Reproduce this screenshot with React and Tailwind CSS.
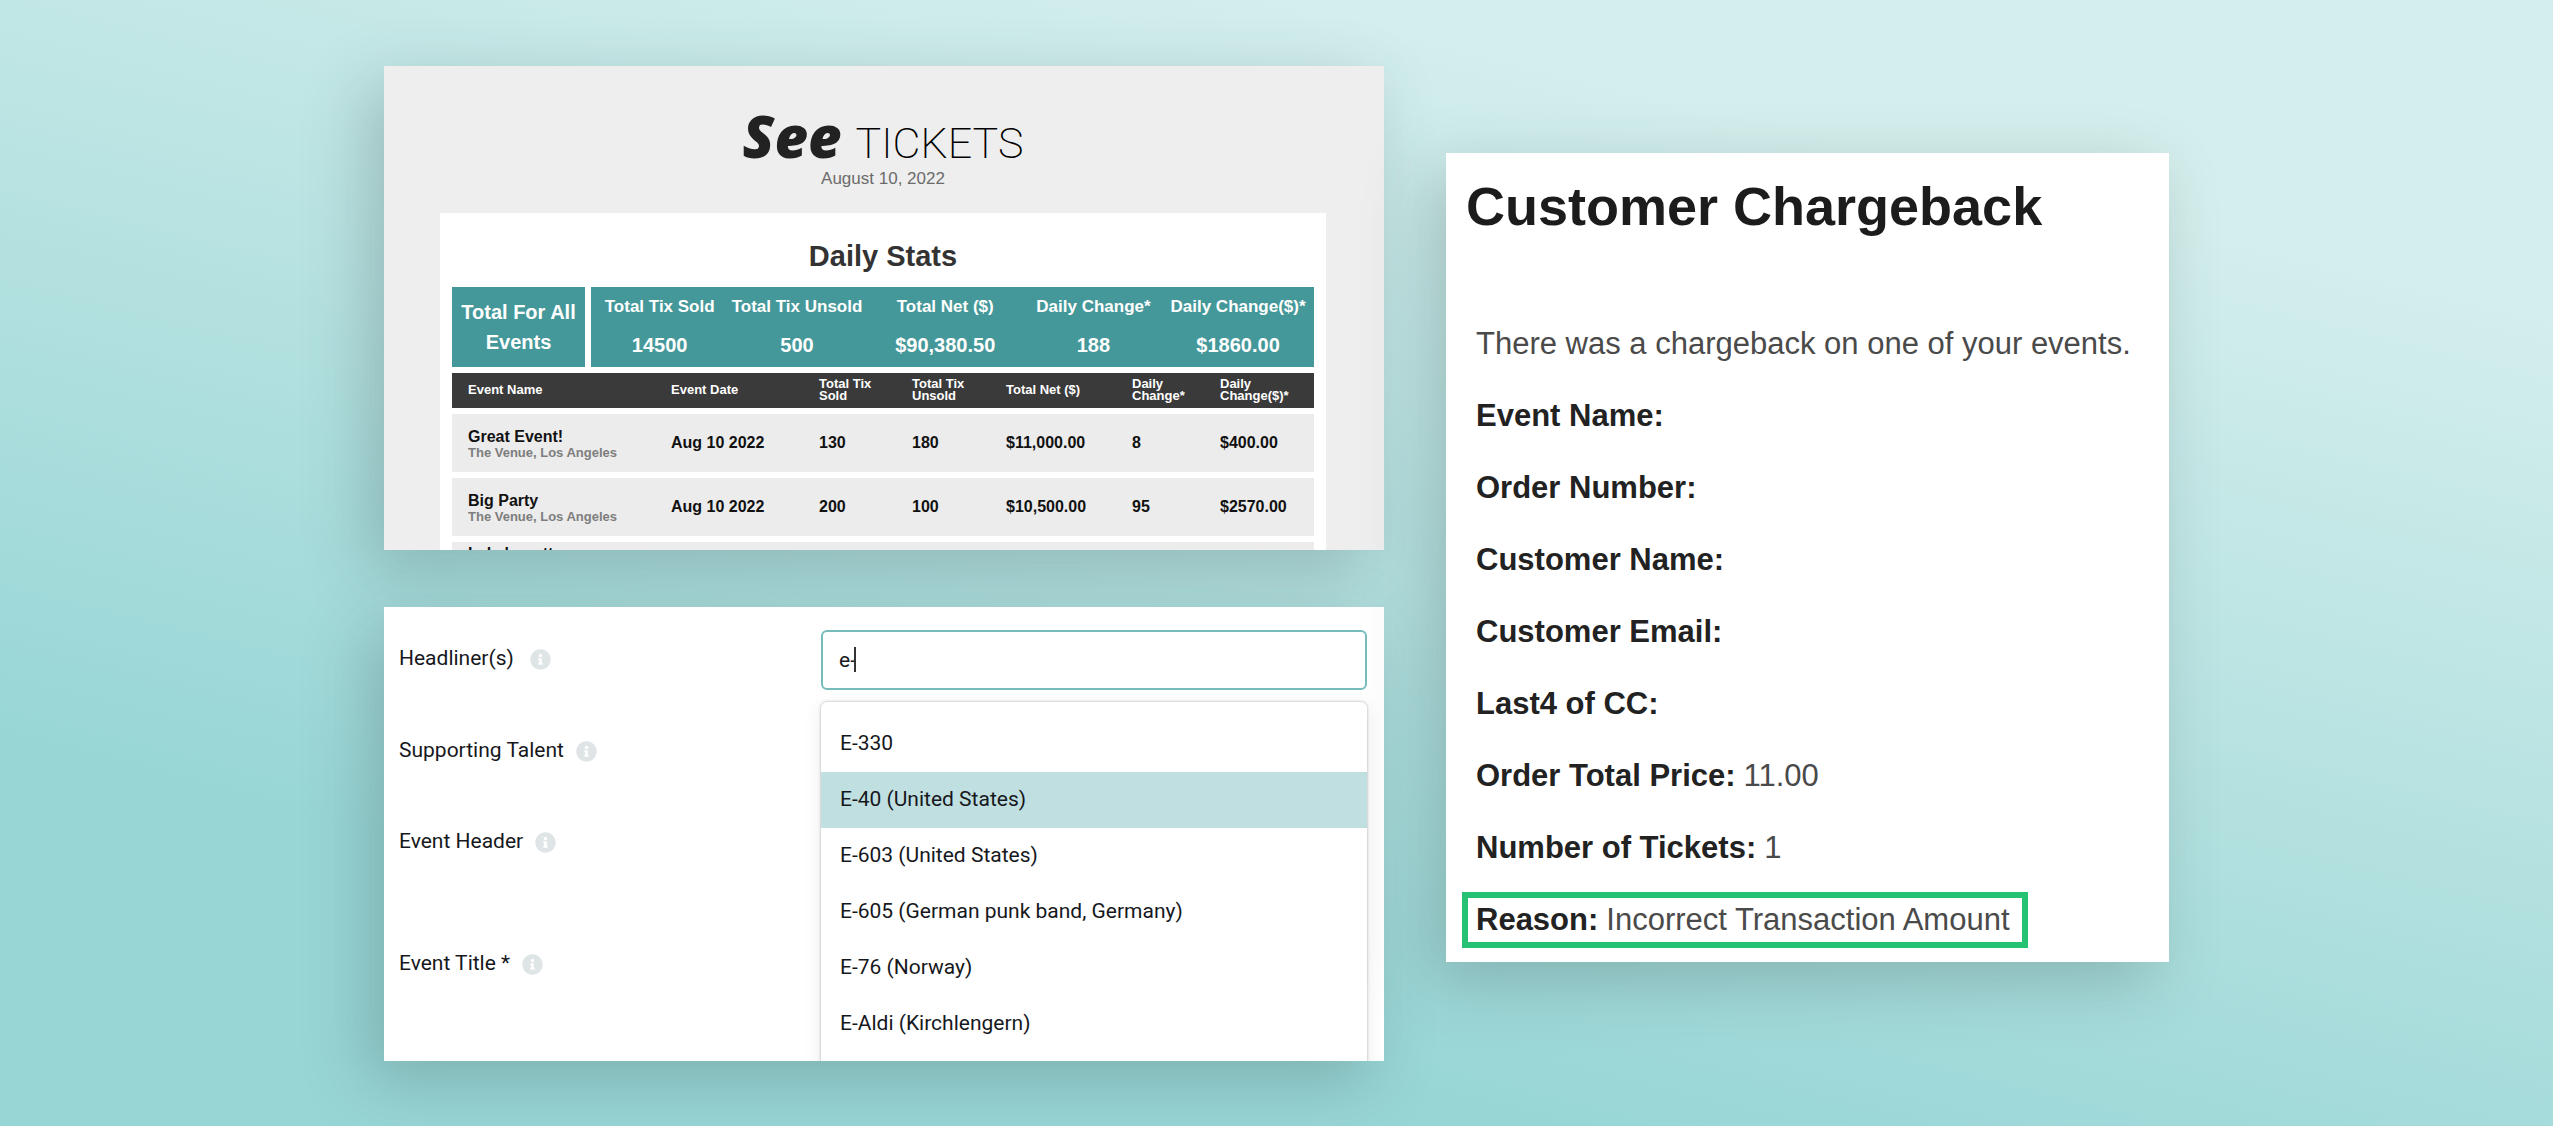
import { useState } from 'react'
import { FaInfoCircle } from 'react-icons/fa'

const TOTALS = [
  { label: 'Total Tix Sold', value: '14500', width: 'w-[19%]' },
  { label: 'Total Tix Unsold', value: '500', width: 'w-[19%]' },
  { label: 'Total Net ($)', value: '$90,380.50', width: 'w-[22%]' },
  { label: 'Daily Change*', value: '188', width: 'w-[19%]' },
  { label: 'Daily Change($)*', value: '$1860.00', width: 'w-[21%]' },
]

const COLUMNS = [
  { label: 'Event Name', width: 'w-[219px]' },
  { label: 'Event Date', width: 'w-[148px]' },
  { label: 'Total Tix Sold', width: 'w-[93px]' },
  { label: 'Total Tix Unsold', width: 'w-[94px]' },
  { label: 'Total Net ($)', width: 'w-[126px]' },
  { label: 'Daily Change*', width: 'w-[88px]' },
  { label: 'Daily Change($)*', width: 'w-[94px]' },
]

const EVENTS = [
  { name: 'Great Event!', venue: 'The Venue, Los Angeles', date: 'Aug 10 2022', sold: '130', unsold: '180', net: '$11,000.00', change: '8', changeNet: '$400.00' },
  { name: 'Big Party', venue: 'The Venue, Los Angeles', date: 'Aug 10 2022', sold: '200', unsold: '100', net: '$10,500.00', change: '95', changeNet: '$2570.00' },
  { name: 'Lakebonett' },
]

const FIELDS = [
  { label: 'Headliner(s)', id: 'headliners', height: 'h-[92px]', gap: 'gap-4' },
  { label: 'Supporting Talent', height: 'h-[91px]', gap: 'gap-3' },
  { label: 'Event Header', height: 'h-[122px]', gap: 'gap-3' },
  { label: 'Event Title *', height: 'h-[91px]', gap: 'gap-3' },
]

const ARTISTS = [
  'E-330',
  'E-40 (United States)',
  'E-603 (United States)',
  'E-605 (German punk band, Germany)',
  'E-76 (Norway)',
  'E-Aldi (Kirchlengern)',
]

const DETAILS = [
  { label: 'Event Name:' },
  { label: 'Order Number:' },
  { label: 'Customer Name:' },
  { label: 'Customer Email:' },
  { label: 'Last4 of CC:' },
  { label: 'Order Total Price:', value: '11.00' },
  { label: 'Number of Tickets:', value: '1' },
  { label: 'Reason:', value: 'Incorrect Transaction Amount', highlight: true },
]

function Logo() {
  return (
    <div className="flex h-[63px] items-baseline justify-center gap-3.5 leading-[60px]">
      <span className="font-['Open_Sans',sans-serif] text-[58px] font-extrabold italic text-[#222]">See</span>
      <span className="font-['Roboto',sans-serif] text-[43px] font-extralight text-black">TICKETS</span>
    </div>
  )
}

function DailyStats() {
  return (
    <section className="h-[484px] overflow-hidden bg-[#eee] pt-10 pr-[58px] pl-14 font-['Liberation_Sans',Arial,sans-serif] shadow-[-16px_20px_60px_rgba(50,70,70,0.26)]">
      <Logo />
      <p className="text-center text-[17px] leading-5 text-[#6b6b6b]">August 10, 2022</p>

      <div className="mt-6 bg-white px-3 pt-6">
        <h2 className="text-center text-[29px] leading-[38px] font-bold text-[#333]">Daily Stats</h2>

        {/* Totals */}
        <div className="mt-3 flex h-20 gap-1.5 text-white">
          <div className="flex w-[133px] shrink-0 items-center justify-center bg-[#45989a] text-center text-[20px] leading-[30px] font-bold">
            Total For All Events
          </div>
          <table className="h-full flex-1 table-fixed bg-[#45989a] text-center font-bold">
            <thead>
              <tr>
                {TOTALS.map((t) => (
                  <th key={t.label} className={`${t.width} pt-2 text-[17px] leading-6 whitespace-nowrap`}>{t.label}</th>
                ))}
              </tr>
            </thead>
            <tbody>
              <tr>
                {TOTALS.map((t) => (
                  <td key={t.label} className="pt-1 text-[20px] leading-6">{t.value}</td>
                ))}
              </tr>
            </tbody>
          </table>
        </div>

        {/* Events */}
        <table className="w-full table-fixed border-separate border-spacing-x-0 border-spacing-y-1.5 text-left font-bold">
          <thead>
            <tr className="h-[35px] bg-[#3a3a3a] text-[13px] leading-3 text-white">
              {COLUMNS.map((c) => (
                <th key={c.label} className={`${c.width} pr-6 first:pl-4 last:pr-4`}>{c.label}</th>
              ))}
            </tr>
          </thead>
          <tbody>
            {EVENTS.map((e) => (
              <tr key={e.name} className="h-[58px] bg-[#ececec] text-[16px] leading-4 text-[#111]">
                <td className={`pt-1 pl-4 ${e.venue ? '' : 'align-top'}`}>
                  {e.name}
                  {e.venue && <div className="text-[13px] text-[#7d7d7d]">{e.venue}</div>}
                </td>
                <td>{e.date}</td>
                <td>{e.sold}</td>
                <td>{e.unsold}</td>
                <td>{e.net}</td>
                <td>{e.change}</td>
                <td>{e.changeNet}</td>
              </tr>
            ))}
          </tbody>
        </table>
      </div>
    </section>
  )
}

function EventForm() {
  const [query, setQuery] = useState('e-')
  const [active, setActive] = useState(1)

  return (
    <section className="flex h-[454px] overflow-hidden bg-white pr-[17px] pl-[15px] font-['Roboto',sans-serif] text-[21px] text-[#16181d] shadow-[-16px_20px_60px_rgba(50,70,70,0.26)]">
      <div className="w-[422px] shrink-0 pt-9">
        {FIELDS.map((f) => (
          <div key={f.label} className={`flex items-start ${f.height} ${f.gap}`}>
            <label htmlFor={f.id} className="leading-[30px]">{f.label}</label>
            <FaInfoCircle className="mt-1.5 size-[21px] text-[#dfe5e7]" />
          </div>
        ))}
      </div>

      <div className="relative mt-[23px] h-[60px] flex-1">
        <input
          id="headliners"
          type="text"
          value={query}
          onChange={(e) => setQuery(e.target.value)}
          className="h-full w-full rounded-md border-2 border-[#76bcbc] bg-white px-4 caret-transparent outline-none"
        />
        {/* Caret */}
        <span className="absolute top-[17px] left-[33px] h-[25px] w-0.5 bg-[#333]" />

        {/* Suggestions */}
        <ul
          role="listbox"
          aria-label="Artists"
          className="absolute top-[72px] left-0 h-[400px] w-full rounded-md bg-white pt-3.5 shadow-[0_0_2px_1px_rgba(0,0,0,0.15),0_4px_20px_rgba(0,0,0,0.08)]"
        >
          {ARTISTS.map((name, idx) => (
            <li
              key={name}
              role="option"
              aria-selected={idx === active}
              onMouseEnter={() => setActive(idx)}
              className={`flex h-14 items-center pl-[19px] ${idx === active ? 'bg-[#c0dfe0]' : ''}`}
            >
              {name}
            </li>
          ))}
        </ul>
      </div>
    </section>
  )
}

function Chargeback() {
  return (
    <section className="bg-white px-4 pt-[23px] pb-3.5 font-['Liberation_Sans',Arial,sans-serif] text-[31px] leading-[44px] text-[#4a4a4a] shadow-[-16px_20px_60px_rgba(50,70,70,0.26)]">
      <h1 className="pl-1 text-[54px] leading-[60px] font-bold text-[#1c1c1c]">Customer Chargeback</h1>
      <p className="mt-20 flex h-14 items-center px-3.5">There was a chargeback on one of your events.</p>
      <dl className="mt-4 flex flex-col items-start gap-4">
        {DETAILS.map((d) => (
          <div
            key={d.label}
            className={`flex h-14 items-center gap-2 border-6 pr-3 pl-2 ${d.highlight ? 'border-[#27c173]' : 'border-transparent'}`}
          >
            <dt className="font-bold text-[#222]">{d.label}</dt>
            {d.value && <dd>{d.value}</dd>}
          </div>
        ))}
      </dl>
    </section>
  )
}

export default function App() {
  return (
    <main className="flex min-h-screen items-center justify-center bg-[linear-gradient(194deg,#d3eeec_18%,#98d6d6_78%)] px-8 py-16">
      <div className="grid w-full max-w-[1785px] grid-cols-[1000fr_723fr] items-start gap-[62px]">
        <div className="flex flex-col gap-[57px]">
          <DailyStats />
          <EventForm />
        </div>
        <div className="pt-[87px]">
          <Chargeback />
        </div>
      </div>
    </main>
  )
}
